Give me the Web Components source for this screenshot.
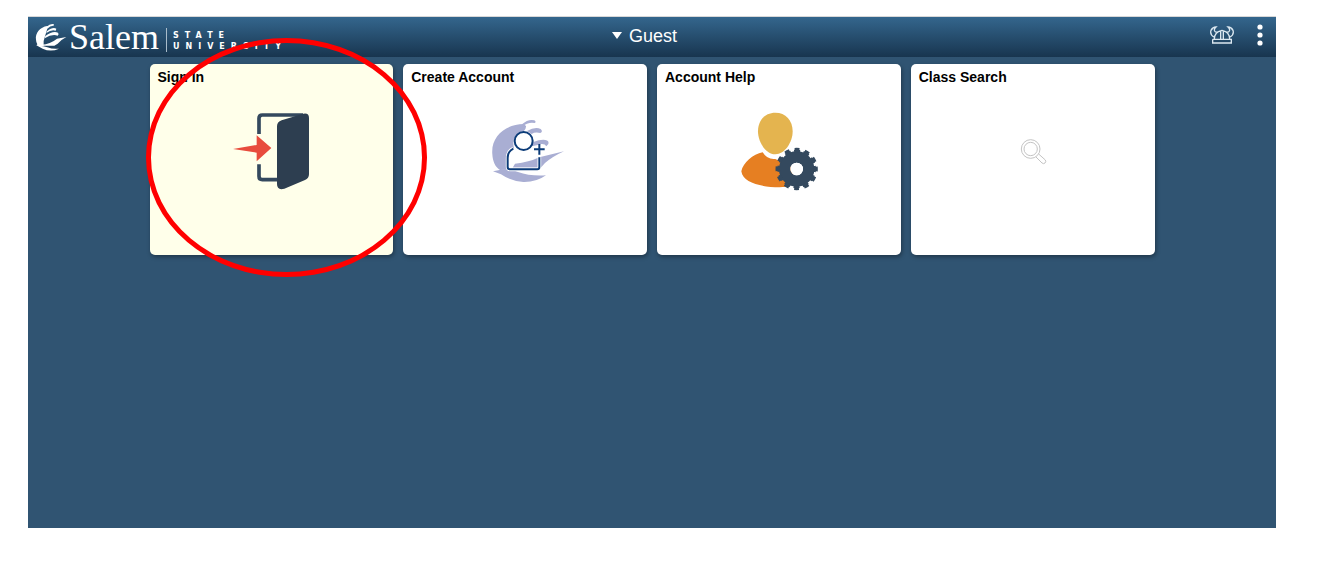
<!DOCTYPE html>
<html lang="en">
<head>
<meta charset="utf-8">
<title>Salem State University</title>
<style>
  body { margin: 0; background: #fff; font-family: "Liberation Sans", Arial, sans-serif; }
</style>
</head>
<body>
<portal-page>
  <portal-header slot="header">
    <brand-logo></brand-logo>
    <home-menu slot="title">Guest</home-menu>
  </portal-header>
  <portal-tile highlighted><span slot="label">Sign In</span>
    <svg slot="icon" viewBox="0 0 240 240" width="80" height="80" aria-hidden="true">
      <path d="M84 69V22q0-10 10-10H216M84 160V196q0 10 10 10H142" fill="none" stroke="#34495e" stroke-width="11"/>
      <path d="M138 46q0-13 14-18L214 9q20-5 20 12V190q0 12-12 17L160 233q-22 6-22-14Z" fill="#2d3e50"/>
      <path d="M6 114 77 102V73L121 111 77 151V125Z" fill="#e84c3d"/>
    </svg>
  </portal-tile>
  <portal-tile><span slot="label">Create Account</span>
    <svg slot="icon" viewBox="-3 0 240 240" width="80" height="80" aria-hidden="true">
      <g fill="#a9aed3">
        <path d="M113 39C60 40 14 75 19 130C20 151 28 169 42 177L65 176V137Q70 120 84 111C76 84 94 62 113 61Q121 53 120 45Z"/>
        <path d="M108 40Q127 23 145 28Q152 33 146 36Q127 32 108 47Z"/>
        <path d="M123 60Q148 46 164 54Q172 62 163 66Q147 62 137 69Z"/>
        <path d="M142 93Q163 85 178 87Q190 89 187 99L181 106Q177 98 166 99Q152 103 137 106Z"/>
        <path d="M87 158Q129 154 160 139L234 121Q201 136 177 156L164 170H80Z"/>
        <path d="M21 181Q65 169 96 183Q132 196 180 193Q151 214 112 213Q74 210 45 190Z"/>
      </g>
      <path d="M82 113Q65 121 65 141V168Q65 175 72 175H154Q160 175 160 168V139" fill="none" stroke="#fff" stroke-width="11"/>
      <circle cx="113" cy="90" r="27" fill="#fff" fill-opacity=".65" stroke="#0b3b78" stroke-width="6"/>
      <path d="M82 113Q65 121 65 141V168Q65 175 72 175H154Q160 175 160 168V139M160 99V131M144 115H176" fill="none" stroke="#0b3b78" stroke-width="6"/>
    </svg>
  </portal-tile>
  <portal-tile><span slot="label">Account Help</span>
    <svg slot="icon" viewBox="0 0 240 240" width="80" height="80" aria-hidden="true">
      <path d="M109 5C140 5 161 28 161 61C161 94 137 130 109 130S57 94 57 61C57 28 78 5 109 5Z" fill="#e4b44f"/>
      <path d="M71 124Q85 147 109 144L173 174 140 228C78 231 12 219 7 181C12 156 42 129 71 124Z" fill="#e67f22"/>
      <g fill="none" stroke="#34495e">
        <circle cx="173" cy="174" r="36" stroke-width="34"/>
        <circle cx="173" cy="174" r="57" stroke-width="13" stroke-dasharray="13.84 16" pathLength="358.08" transform="rotate(-7 173 174)"/>
        <circle cx="173" cy="174" r="54" stroke-width="8" stroke-dasharray="18.84 11" pathLength="358.08" transform="rotate(-9.5 173 174)"/>
      </g>
      <circle cx="173" cy="174" r="19" fill="#fff"/>
    </svg>
  </portal-tile>
  <portal-tile><span slot="label">Class Search</span>
    <svg slot="icon" viewBox="0 0 240 240" width="80" height="80" aria-hidden="true">
      <g fill="none" stroke="#c4c4c4" stroke-width="3">
        <circle cx="113" cy="114" r="28"/><circle cx="113" cy="114" r="20"/>
        <path d="M129 138 147 156Q152 160 156 156T157 147L137 129"/>
      </g>
    </svg>
  </portal-tile>
</portal-page>

<script>
const define = (name, html) => customElements.define(name, class extends HTMLElement {
  constructor() {
    super();
    const template = document.createElement('template');
    template.innerHTML = html;
    this.attachShadow({ mode: 'open' }).append(template.content.cloneNode(true));
  }
});

define('portal-page', `
  <style>
    :host { box-sizing: border-box; min-height: 100vh; padding: 16px 42px 33px 28px; display: flex; }
    .frame { flex: 1; background: #305472; border-top: 1px solid #d8d8d8; }
    main { display: grid; grid-template-columns: repeat(4, 1fr); gap: 10px; max-width: 1005px; margin: 0 auto; padding: 7px 0 16px; }
  </style>
  <div class="frame">
    <slot name="header"></slot>
    <main><slot></slot></main>
  </div>`);

define('portal-header', `
  <style>
    :host { display: block; }
    header { display: grid; grid-template-columns: 1fr auto 1fr; align-items: center; height: 40px; padding: 0 8px 0 7px; color: #fff; background: linear-gradient(#34668d, #18354f); }
    nav { display: flex; justify-content: flex-end; align-items: center; gap: 18px; padding-bottom: 4px; }
    button { display: flex; padding: 0; border: 0; background: none; color: inherit; cursor: pointer; }
  </style>
  <header>
    <slot></slot>
    <slot name="title"></slot>
    <nav>
      <button type="button" aria-label="Home">
        <svg viewBox="0 0 72 54" width="24" height="18" fill="none" stroke="#dbe7f0" stroke-width="4">
          <path d="M8 40V51H64V40H8M13 39Q13 18 36 13Q59 18 59 39M32 39V15M40 39V15"/>
          <path d="M12 33Q-1 26 3 13Q8 3 18 3Q11 9 14 15Q17 20 23 18M60 33Q73 26 69 13Q64 3 54 3Q61 9 58 15Q55 20 49 18"/>
        </svg>
      </button>
      <button type="button" aria-label="Actions">
        <svg viewBox="0 0 16 24" width="16" height="24" fill="#fff">
          <circle cx="8" cy="4" r="2.6"/><circle cx="8" cy="12" r="2.6"/><circle cx="8" cy="20" r="2.6"/>
        </svg>
      </button>
    </nav>
  </header>`);

define('brand-logo', `
  <style>
    :host { display: block; }
    a { display: flex; align-items: center; color: #fff; text-decoration: none; }
    .name { margin-left: 2px; font: 36px/40px "Liberation Serif", "Times New Roman", serif; }
    /* The lockup's second part is set in small, widely tracked capitals. */
    .sub { margin: 6px 0 0 7px; padding: 2px 0 0 6px; border-left: 1px solid #a9bccb; font: bold 8px/11px "DejaVu Sans", sans-serif; letter-spacing: 6px; }
    .sub span { display: block; }
  </style>
  <a href="#" aria-label="Salem State University">
    <svg viewBox="0 0 96 84" width="32" height="28" fill="#fff" aria-hidden="true">
      <path d="M37 9C15 12 0 31 3 50Q4 64 14 70L26 69Q24 54 30 40Q36 21 39 9Z"/>
      <path d="M34 12Q47 0 57 4L56 8Q46 7 37 17ZM36 25Q53 11 64 17L62 23Q49 19 34 30ZM31 39Q54 22 69 29Q73 34 68 38Q51 32 29 46Z"/>
      <path d="M22 60 20 65Q45 64 66 47L94 42Q80 49 68 62L58 68H12Q26 68 37 73Q53 79 72 77Q47 88 23 77L4 67 14 58Z"/>
    </svg>
    <span class="name">Salem</span>
    <span class="sub"><span>STATE</span><span>UNIVERSITY</span></span>
  </a>`);

define('home-menu', `
  <style>
    :host { display: block; }
    button { display: flex; align-items: center; gap: 7px; padding: 0 14px 3px 0; border: 0; background: none; color: #fff; font: 18px/20px "Liberation Sans", Arial, sans-serif; cursor: pointer; }
  </style>
  <button type="button" aria-haspopup="true">
    <svg viewBox="0 0 10 8" width="10" height="8" fill="#fff" aria-hidden="true"><path d="M0 0H10L5 7Z"/></svg>
    <slot></slot>
  </button>`);

define('portal-tile', `
  <style>
    :host { display: block; position: relative; }
    a { display: flex; flex-direction: column; box-sizing: border-box; min-height: 191px; padding: 5px 8px; border-radius: 5px; background: #fff; color: #000; text-decoration: none; font: bold 14px/17px "Liberation Sans", Arial, sans-serif; box-shadow: 1px 2px 4px rgba(0, 0, 0, .35); }
    .icon { display: flex; justify-content: center; padding-top: 25px; }
    .ring { display: none; }
    :host([highlighted]) { z-index: 1; }
    :host([highlighted]) a { background: #ffffea; }
    :host([highlighted]) .ring { display: block; position: absolute; inset: -26px -34px -22px -4px; border: 5px solid #f00; border-radius: 50%; pointer-events: none; }
  </style>
  <a href="#"><slot name="label"></slot><div class="icon"><slot name="icon"></slot></div></a>
  <div class="ring"></div>`);
</script>
</body>
</html>
